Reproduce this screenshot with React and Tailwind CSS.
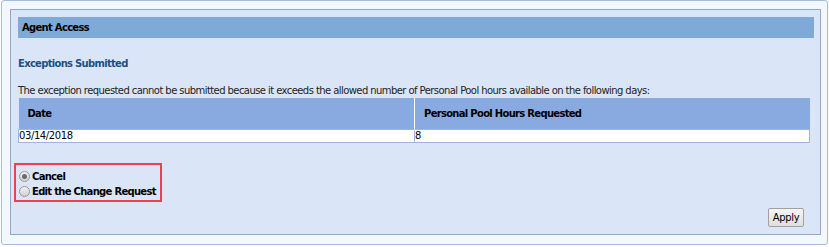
export default function App() {
  const font = { fontFamily: '"DejaVu Sans", Verdana, sans-serif' };

  return (
    <div className="w-[829px] h-[247px] bg-white" style={font}>
      <div className="ml-px w-[827px] h-[245px] rounded-[3px] border border-[#a4bfdd] bg-[#f3f8fe] pt-[8px] pl-[8px]">
        {/* main panel */}
        <div className="w-[811px] h-[226px] border border-[#8fa9c7] bg-[#dbe5f8] pt-[7px] pl-[7px] pr-[6px]">
          <div className="h-[21px] bg-[#7fa9d7] flex items-center pl-[4px] text-[10px] font-bold tracking-[-0.7px] text-black">
            Agent Access
          </div>

          <div className="mt-[20px] text-[10px] font-bold tracking-[-0.7px] text-[#1d5087] leading-[12px]">
            Exceptions Submitted
          </div>

          <p className="mt-[15px] text-[10px] tracking-[-0.57px] whitespace-nowrap text-[#222] leading-[12px]">
            The exception requested cannot be submitted because it exceeds the allowed number of Personal Pool hours available on the following days:
          </p>

          {/* table */}
          <table className="mt-[1px] w-[792px] border-collapse text-[10px] text-black">
            <thead>
              <tr className="h-[31px] bg-[#88aae0]">
                <th className="w-[396px] text-left font-bold tracking-[-0.7px] pl-[9px] border-r border-white">Date</th>
                <th className="text-left font-bold tracking-[-0.7px] pl-[9px]">Personal Pool Hours Requested</th>
              </tr>
            </thead>
            <tbody>
              <tr className="h-[13px] bg-white">
                <td className="leading-[12px] tracking-[-0.4px] border border-[#9fb6dc]">03/14/2018</td>
                <td className="leading-[12px] border border-[#9fb6dc]">8</td>
              </tr>
            </tbody>
          </table>

          <div className="flex items-start justify-between">
            {/* options */}
            <div className="-ml-[4px] mt-[20px] w-[148px] h-[39px] border-2 border-[#f0404c] pl-[3px] pt-[4px] text-[10px] font-bold tracking-[-0.7px] whitespace-nowrap text-black">
              <label className="flex items-center h-[15px] gap-[2px]">
                <span className="shrink-0 w-[11px] h-[11px] rounded-full border border-[#9a9a9a] bg-gradient-to-b from-[#f2f2f2] to-[#d0d0d0] flex items-center justify-center">
                  <span className="w-[5px] h-[5px] rounded-full bg-[#6b6b6b]" />
                </span>
                Cancel
              </label>
              <label className="flex items-center h-[15px] gap-[2px]">
                <span className="shrink-0 w-[11px] h-[11px] rounded-full border border-[#9a9a9a] bg-gradient-to-b from-[#f2f2f2] to-[#d0d0d0]" />
                Edit the Change Request
              </label>
            </div>

            <button className="mt-[65px] mr-[10px] w-[36px] h-[19px] border border-[#a0a0a0] rounded-[2px] bg-gradient-to-b from-[#f6f6f6] to-[#dedede] text-[10px] tracking-[-0.3px] text-black">
              Apply
            </button>
          </div>
        </div>
      </div>
    </div>
  );
}
